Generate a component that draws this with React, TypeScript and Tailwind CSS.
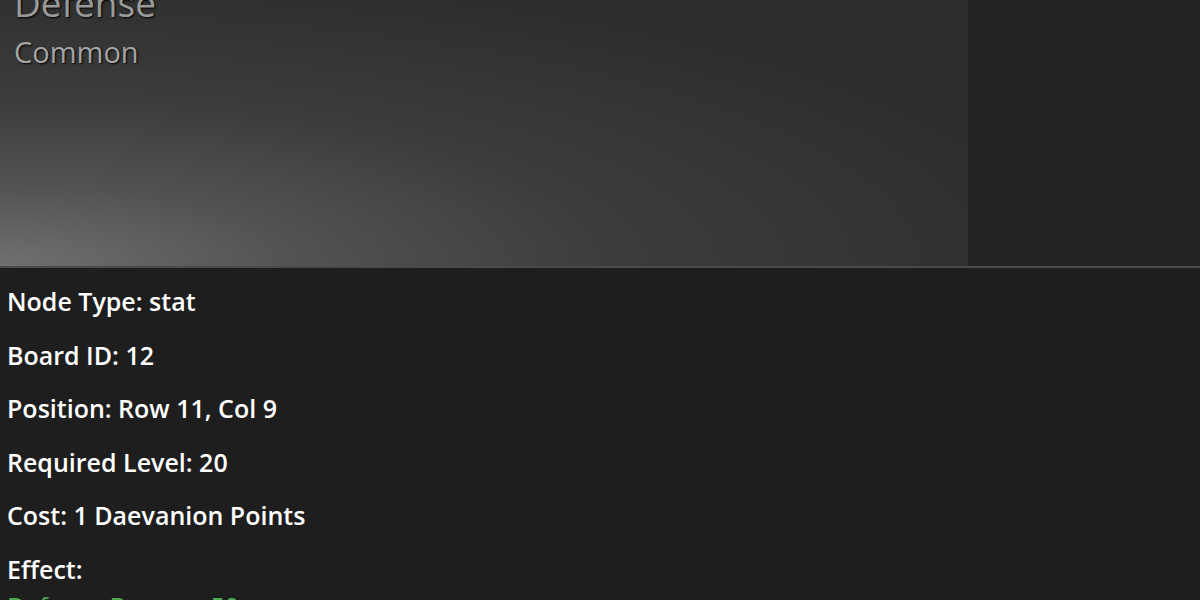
export default function App() {
  const rows = [
    "Node Type: stat",
    "Board ID: 12",
    "Position: Row 11, Col 9",
    "Required Level: 20",
    "Cost: 1 Daevanion Points",
  ];
  return (
    <div className="w-[1200px] h-[600px] overflow-hidden bg-[#1e1e1e] font-['Open_Sans',sans-serif]">
      <div className="flex h-[266px] bg-[#222222]">
        <div className="w-[968px] h-full px-[14px] bg-[radial-gradient(ellipse_at_0%_100%,#707070_0%,#525252_22%,#3c3c3c_45%,#2d2d2d_80%)]">
          <h2 className="-mt-[19px] text-[37px] leading-[44px] text-[#9a9a9a] [text-shadow:1px_1px_2px_#000]">
            Defense
          </h2>
          <p className="mt-[10px] text-[29px] leading-[34px] text-[#a5a5a5] [text-shadow:1px_1px_2px_#000]">
            Common
          </p>
        </div>
      </div>
      <div className="border-t-2 border-[#4a4a4a] px-[7px] pt-[17px] text-white">
        {rows.map((r) => (
          <p key={r} className="mb-[21.6px] text-[25px] leading-[32px] font-semibold">
            {r}
          </p>
        ))}
        <p className="text-[25px] leading-[32px] font-semibold">Effect:</p>
        <p className="mt-[5px] text-[25px] leading-[32px] text-[#4caf50]">Defense Bonus: +50</p>
      </div>
    </div>
  );
}
